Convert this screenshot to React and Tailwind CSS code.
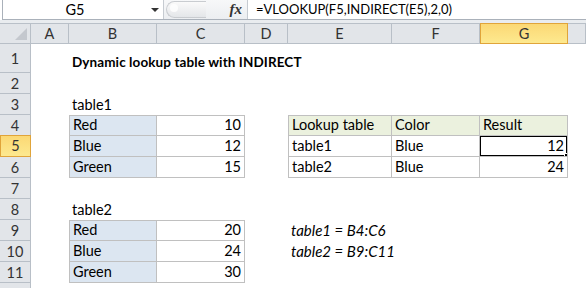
import React from 'react';

const COLS = ['A', 'B', 'C', 'D', 'E', 'F', 'G', 'H'];

// cell content keyed by "col+row"
const cells = {
  B1: { text: 'Dynamic lookup table with INDIRECT', bold: true, overflow: true },
  B3: { text: 'table1' },
  B4: { text: 'Red', fill: 'bg-[#dce6f1]', box: 'tl' },
  C4: { text: '10', right: true, box: 't' },
  B5: { text: 'Blue', fill: 'bg-[#dce6f1]', box: 'l' },
  C5: { text: '12', right: true, box: '' },
  B6: { text: 'Green', fill: 'bg-[#dce6f1]', box: 'l' },
  C6: { text: '15', right: true, box: '' },
  E4: { text: 'Lookup table', fill: 'bg-[#ebf1de]', box: 'tl' },
  F4: { text: 'Color', fill: 'bg-[#ebf1de]', box: 't' },
  G4: { text: 'Result', fill: 'bg-[#ebf1de]', box: 't' },
  E5: { text: 'table1', box: 'l' },
  F5: { text: 'Blue', box: '' },
  G5: { text: '12', right: true, box: '', active: true },
  E6: { text: 'table2', box: 'l' },
  F6: { text: 'Blue', box: '' },
  G6: { text: '24', right: true, box: '' },
  B8: { text: 'table2' },
  B9: { text: 'Red', fill: 'bg-[#dce6f1]', box: 'tl' },
  C9: { text: '20', right: true, box: 't' },
  B10: { text: 'Blue', fill: 'bg-[#dce6f1]', box: 'l' },
  C10: { text: '24', right: true, box: '' },
  B11: { text: 'Green', fill: 'bg-[#dce6f1]', box: 'l' },
  C11: { text: '30', right: true, box: '' },
  E9: { text: 'table1 = B4:C6', italic: true, overflow: true },
  E10: { text: 'table2 = B9:C11', italic: true, overflow: true },
};

function Cell({ id }) {
  const c = cells[id];
  if (!c) return <div className="relative" />;
  const boxed = c.box !== undefined;
  const cls = [
    'relative flex items-end pb-[1px] px-[3px] text-[14.5px] leading-[18px] text-black whitespace-nowrap',
    c.fill || '',
    c.right ? 'justify-end' : '',
    c.overflow ? 'overflow-visible z-10' : 'overflow-hidden',
    boxed ? 'border-r border-b border-[#c0c0c0]' : '',
    boxed && c.box.includes('t') ? 'border-t' : '',
    boxed && c.box.includes('l') ? 'border-l' : '',
  ].join(' ');
  const textCls = [
    c.overflow ? 'absolute left-[3px] bottom-[2px]' : '',
    c.bold ? 'font-bold text-[13.5px] tracking-[0.1px]' : '',
    c.italic ? 'italic text-[15px]' : '',
  ].join(' ');
  return (
    <div className={cls}>
      {c.active && (
        <div className="absolute -left-[1px] -top-[1px] -right-[1px] -bottom-[1px] border-2 border-black">
          <div className="absolute -right-[4px] -bottom-[4px] w-[6px] h-[6px] bg-black border border-white" />
        </div>
      )}
      <span className={textCls}>{c.text}</span>
    </div>
  );
}

function FormulaBar() {
  return (
    <div className="flex h-[20px] border-l border-b border-[#aab1ba] ml-[2px] bg-white">
      <div className="w-[144px] flex items-center justify-center text-[14.5px] text-black">G5</div>
      <div className="w-[16px] flex items-center justify-center">
        <div className="w-0 h-0 border-l-[4px] border-r-[4px] border-t-[4px] border-l-transparent border-r-transparent border-t-[#333]" />
      </div>
      <div className="w-[84px] flex items-center border-l border-[#c6cbd1] bg-gradient-to-b from-[#f7f8f9] to-[#eceef1] relative">
        <div className="absolute left-[2px] top-[1px] h-[17px] w-[40px] rounded-l-full bg-gradient-to-b from-[#fafafa] to-[#e4e6e9] border border-[#c9ccd0] border-r-0" />
        <div className="absolute left-[6px] top-[4px] w-[8px] h-[8px] rounded-full bg-white/80" />
        <span className="ml-auto mr-[5px] text-[15px] italic font-bold text-[#333] [font-family:'Liberation_Serif',serif]">
          fx
        </span>
      </div>
      <div className="flex-1 flex items-center border-l border-[#c6cbd1] pl-[8px] text-[13px] text-black">
        =VLOOKUP(F5,INDIRECT(E5),2,0)
      </div>
    </div>
  );
}

const hdr = 'flex items-center justify-center text-[14.5px] text-[#333] bg-[#e2e5e9] border-r border-b border-[#b8bfc7]';
const hdrSel = 'flex items-center justify-center text-[14.5px] text-[#333] bg-gradient-to-b from-[#fbd874] to-[#fde98f] border border-[#e0a43a] -mt-[1px]';

export default function App() {
  const rows = Array.from({ length: 12 }, (_, i) => i + 1);
  return (
    <div className="w-[586px] h-[288px] overflow-hidden bg-white [font-family:Lato,'Open_Sans',sans-serif]">
      <FormulaBar />
      <div className="h-[4px] bg-[#e9ecef] border-b border-[#b9c0c8]" />
      <div className="grid grid-cols-[31px_38px_88px_88px_43px_104px_88px_88px_1fr] grid-rows-[20px_29px_repeat(11,21px)]">
        {/* column headers */}
        <div className="bg-[#e2e5e9] border-r border-b border-[#b8bfc7] relative">
          <div className="absolute right-[3px] bottom-[3px] w-0 h-0 border-l-[12px] border-b-[12px] border-l-transparent border-b-[#c4c8ce]" />
        </div>
        {COLS.map((c) => (
          <div key={c} className={c === 'G' ? hdrSel + ' h-[21px]' : hdr}>
            {c === 'H' ? '' : c}
          </div>
        ))}
        {rows.map((r) => (
          <React.Fragment key={r}>
            <div className={r === 5 ? hdrSel + ' h-[22px]' : hdr + ' pt-[2px]'}>
              {r === 12 ? '' : r}
            </div>
            {COLS.map((c) => (
              <Cell key={c + r} id={c + r} />
            ))}
          </React.Fragment>
        ))}
      </div>
    </div>
  );
}
